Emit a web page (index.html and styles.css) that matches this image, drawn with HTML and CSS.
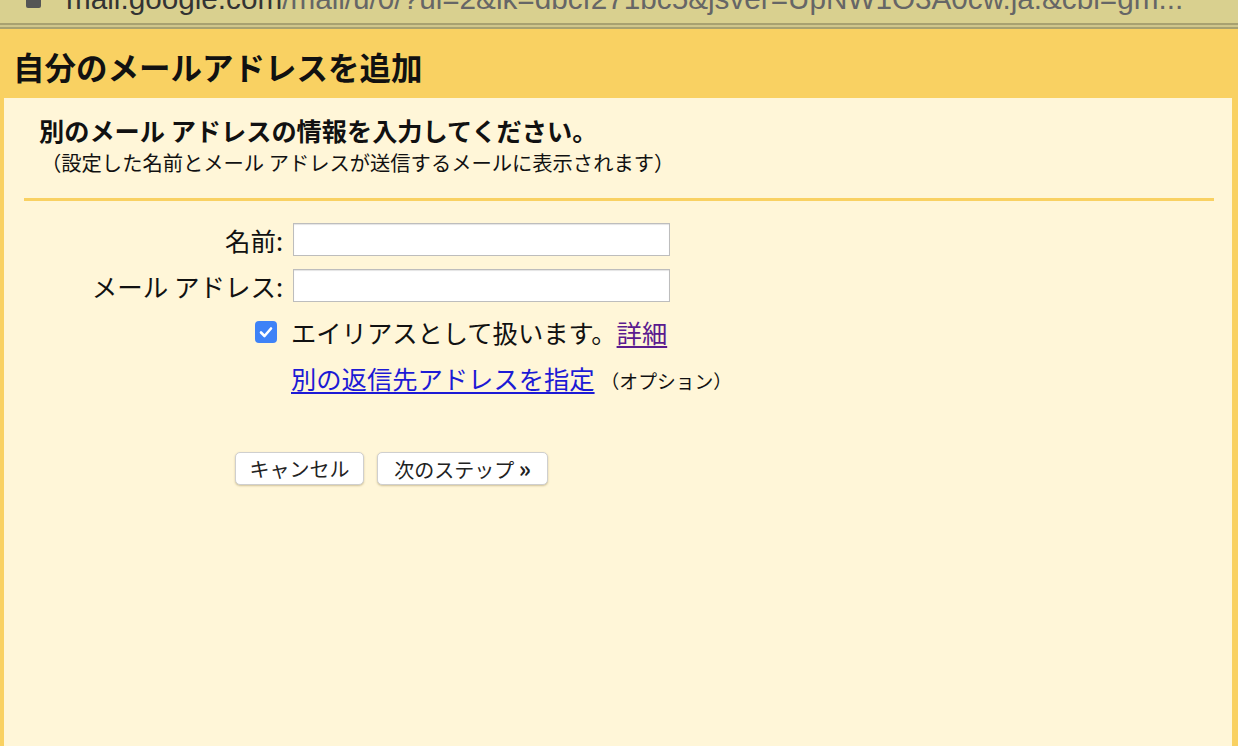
FILE: index.html
```html
<!DOCTYPE html>
<html lang="ja">
<head>
<meta charset="utf-8">
<title>自分のメールアドレスを追加</title>
<link rel="stylesheet" href="styles.css">
</head>
<body>
<div class="urlbar">
  <span class="site-icon"></span>
  <span class="url"><span class="host">mail.google.com</span>/mail/u/0/?ui=2&amp;ik=dbcf271bc5&amp;jsver=UpNW1O3A0cw.ja.&amp;cbl=gm...</span>
</div>
<div class="frame">
  <h1 class="title">自分のメールアドレスを追加</h1>
  <div class="panel">
    <div class="intro">
      <h2 class="lead">別のメール アドレスの情報を入力してください。</h2>
      <p class="note">（設定した名前とメール アドレスが送信するメールに表示されます）</p>
    </div>
    <div class="rule"></div>
    <div class="form">
      <label class="label">名前:</label>
      <input class="field" type="text">
      <label class="label">メール アドレス:</label>
      <input class="field" type="text">
      <span class="check">
        <svg width="22" height="22" viewBox="0 0 22 22"><rect x="0" y="0" width="22" height="22" rx="4" fill="#3e82f7"/><path d="M6 11.5 L9.5 15 L16 7.5" fill="none" stroke="#fff" stroke-width="2.6" stroke-linecap="round" stroke-linejoin="round"/></svg>
      </span>
      <span class="alias">エイリアスとして扱います。<a class="visited" href="#">詳細</a></span>
      <span></span>
      <span class="reply"><a class="link" href="#">別の返信先アドレスを指定</a><span class="opt">（オプション）</span></span>
    </div>
    <div class="buttons">
      <button class="btn cancel">キャンセル</button>
      <button class="btn next">次のステップ <b class="raquo">»</b></button>
    </div>
  </div>
</div>
</body>
</html>
```

FILE: styles.css
```css
html, body {
  margin: 0;
  padding: 0;
  height: 100%;
  overflow: hidden;
}
body {
  font-family: "Noto Sans CJK JP", "Noto Sans", sans-serif;
  background: #f9d162;
  color: #111;
}
.urlbar {
  height: 23px;
  background: #d9d08f;
  border-bottom: 2px solid #a8a170;
  box-shadow: 0 2px 0 #cfc68c, 0 4px 0 #a8a170;
  display: flex;
  align-items: flex-end;
  overflow: hidden;
  position: relative;
  z-index: 1;
}
.site-icon {
  width: 15px;
  height: 14px;
  margin: 0 0 15px 26px;
  background: #555;
  border-radius: 2px;
  flex: none;
}
.url {
  font-family: "Liberation Sans", Arial, sans-serif;
  font-size: 29.7px;
  line-height: 34px;
  margin: 0 0 7px 25px;
  color: #666;
  white-space: nowrap;
}
.url .host {
  color: #333;
}
.frame {
  display: flex;
  flex-direction: column;
  height: calc(100% - 27px);
  margin-top: 4px;
}
.title {
  margin: 0;
  height: 69px;
  padding: 0 0 0 13px;
  font-size: 31.5px;
  line-height: 74px;
  font-weight: bold;
  color: #111;
}
.panel {
  flex: 1;
  background: #fff6d8;
  margin: 0 6px 0 4px;
}
.intro {
  padding: 14px 0 0 35px;
  height: 86px;
}
.lead {
  margin: 0;
  font-size: 25.2px;
  line-height: 36px;
  font-weight: bold;
}
.note {
  margin: 0 0 0 2px;
  font-size: 20.3px;
  line-height: 28px;
}
.rule {
  height: 3px;
  background: #f9d162;
  margin: 0 18px 0 20px;
}
.form {
  display: grid;
  grid-template-columns: 279px 377px;
  column-gap: 10px;
  row-gap: 13px;
  margin-top: 22px;
  align-items: center;
}
.label {
  justify-self: end;
  font-size: 25.5px;
  line-height: 33px;
}
.field {
  box-sizing: border-box;
  width: 377px;
  height: 33px;
  margin: 0;
  border: 1px solid #bdbdbd;
  box-shadow: inset 0 1px 1px #e4e4e4;
  background: #fff;
  padding: 2px 6px;
  font-size: 18px;
}
.check {
  justify-self: end;
  margin-right: 6px;
  height: 22px;
  margin-top: 0;
}
.check svg {
  display: block;
}
.alias {
  font-size: 25.3px;
  line-height: 34px;
  margin-top: 0;
  margin-left: -2px;
  white-space: nowrap;
}
.visited {
  color: #5b1b8f;
  text-decoration: underline;
  text-decoration-thickness: 2px;
  text-underline-offset: 3px;
}
.reply {
  font-size: 25.3px;
  line-height: 34px;
  margin-top: -1px;
  margin-left: -2px;
  white-space: nowrap;
}
.link {
  color: #1d1ad5;
  text-decoration: underline;
  text-decoration-thickness: 2px;
  text-underline-offset: 3px;
}
.opt {
  font-size: 18.8px;
  color: #111;
  margin-left: 6px;
}
.buttons {
  display: flex;
  gap: 13px;
  margin: 54px 0 0 231px;
}
.btn {
  height: 33px;
  background: #fff;
  border: 1px solid #cfcfcf;
  border-radius: 5px;
  box-shadow: 0 1px 2px rgba(120, 100, 40, 0.35);
  font-family: "Noto Sans CJK JP", "Noto Sans", sans-serif;
  font-size: 20px;
  line-height: 29px;
  color: #222;
  padding: 0 13px;
}
.raquo {
  font-size: 23px;
  font-weight: bold;
}
.cancel {
  width: 129px;
}
.next {
  width: 171px;
}
```
